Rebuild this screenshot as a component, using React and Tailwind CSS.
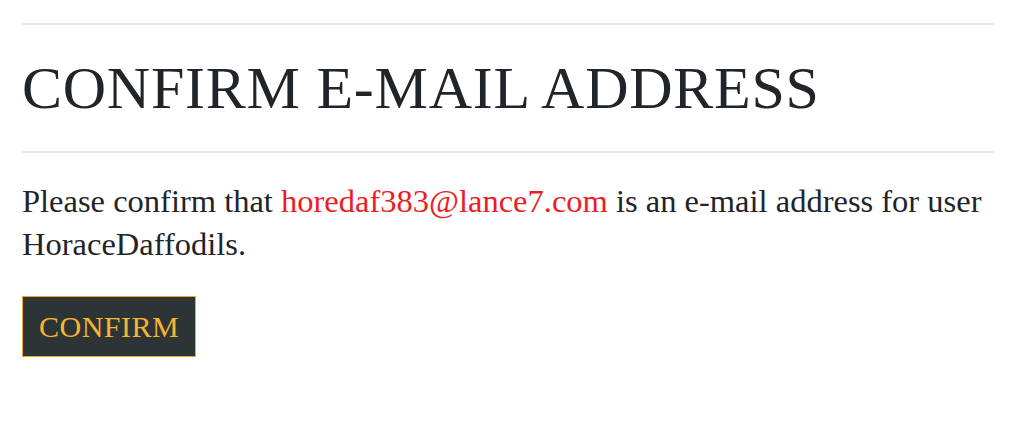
export default function App() {
  return (
    <div className="min-h-screen bg-white pl-[22px] pr-[26px] pt-[23px] font-['Liberation_Serif',serif] text-[#212529]">
      <hr className="border-0 border-t-2 border-[#e6e6e6]" />
      <h1 className="mt-[27px] text-[60px] leading-[72px] tracking-[0.75px] uppercase">
        Confirm E-mail Address
      </h1>
      <hr className="mt-[27px] border-0 border-t-2 border-[#e6e6e6]" />
      <p className="mt-[27px] text-[32.5px] leading-[43px]">
        Please confirm that{" "}
        <a href="#" className="text-[#ee1c25]">horedaf383@lance7.com</a> is an
        e-mail address for user HoraceDaffodils.
      </p>
      <button
        type="button"
        className="mt-[30px] flex h-[61px] w-[174px] items-center border border-[#f5a623] bg-[#2d3436] pl-4 text-[30px] leading-[30px] uppercase tracking-[0.5px] text-[#f5b431]"
      >
        Confirm
      </button>
    </div>
  );
}
